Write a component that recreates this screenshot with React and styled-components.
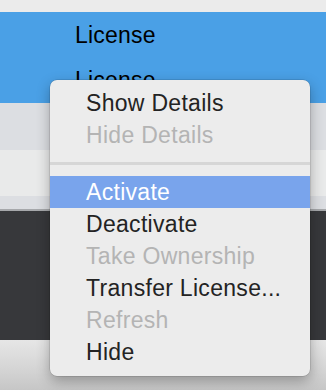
import React from 'react';
import styled, { createGlobalStyle } from 'styled-components';

const GlobalStyle = createGlobalStyle`
  html, body {
    margin: 0;
    padding: 0;
    background: #ebebeb;
  }
  body {
    font-family: "Liberation Sans", Arial, Helvetica, sans-serif;
  }
`;

const rowColors = {
  selected: '#4aa0e6',
  even: '#dcdee2',
  odd: '#e9eaea',
};

const Screen = styled.div`
  position: relative;
  width: 326px;
  height: 390px;
  overflow: hidden;
  display: flex;
  flex-direction: column;
  background: #ebebeb;
`;

const TopStrip = styled.div`
  height: 12px;
  flex: none;
  background: #ebebeb;
`;

const Row = styled.div`
  flex: none;
  height: ${p => p.$h}px;
  line-height: ${p => p.$h}px;
  padding-left: 75px;
  background: ${p => rowColors[p.$kind]};
  color: #000;
  font-size: 23px;
  letter-spacing: 0.2px;
  white-space: nowrap;
`;

const Divider = styled.div`
  flex: none;
  height: 2px;
  background: #a6a8ab;
`;

const DarkPanel = styled.div`
  flex: none;
  height: 129px;
  background: #37383b;
`;

const Footer = styled.div`
  flex: 1;
  background: linear-gradient(180deg, #e6e6e6 0%, #d4d4d4 60%, #c6c6c6 100%);
`;

const Menu = styled.ul`
  position: absolute;
  left: 50px;
  top: 80px;
  width: 260px;
  margin: 0;
  padding: 7px 0 8px;
  list-style: none;
  background: #ececec;
  border-radius: 7px;
  box-shadow: 0 0 0 0.5px rgba(0, 0, 0, 0.18), 0 5px 14px rgba(0, 0, 0, 0.3);
`;

const Item = styled.li`
  height: 32px;
  line-height: 32px;
  padding-left: 36px;
  font-size: 23px;
  letter-spacing: 0.3px;
  white-space: nowrap;
  color: ${p => (p.$active ? '#fff' : p.$disabled ? '#b4b4b4' : '#232323')};
  background: ${p => (p.$active ? '#79a4ec' : 'transparent')};
`;

const Separator = styled.li`
  height: 3px;
  margin: 11px 0;
  background: #d6d6d6;
`;

const items = [
  { label: 'Show Details' },
  { label: 'Hide Details', disabled: true },
  { sep: true },
  { label: 'Activate', active: true },
  { label: 'Deactivate' },
  { label: 'Take Ownership', disabled: true },
  { label: 'Transfer License...' },
  { label: 'Refresh', disabled: true },
  { label: 'Hide' },
];

export default function App() {
  return (
    <>
      <GlobalStyle />
      <Screen>
        <TopStrip />
        <Row $kind="selected" $h={46}>License</Row>
        <Row $kind="selected" $h={45}>License</Row>
        <Row $kind="even" $h={47} />
        <Row $kind="odd" $h={46} />
        <Row $kind="even" $h={13} />
        <Divider />
        <DarkPanel />
        <Footer />
        <Menu>
          {items.map((it, i) =>
            it.sep ? (
              <Separator key={i} />
            ) : (
              <Item key={i} $active={it.active} $disabled={it.disabled}>
                {it.label}
              </Item>
            )
          )}
        </Menu>
      </Screen>
    </>
  );
}
